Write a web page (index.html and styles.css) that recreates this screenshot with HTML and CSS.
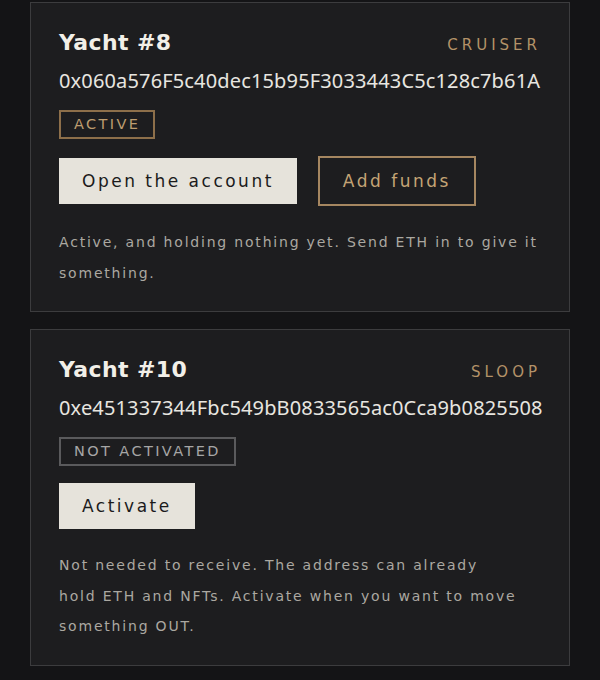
FILE: index.html
```html
<!DOCTYPE html>
<html lang="en">
<head>
    <meta charset="UTF-8">
    <meta name="viewport" content="width=device-width, initial-scale=1.0">
    <title>Yachts</title>
    <link rel="stylesheet" href="styles.css">
</head>
<body>
    <div class="yacht-list">
        <div class="yacht-card">
            <div class="yacht-head">
                <h3>Yacht #8</h3>
                <span class="yacht-class">CRUISER</span>
            </div>
            <div class="yacht-address">0x060a576F5c40dec15b95F3033443C5c128c7b61A</div>
            <span class="badge badge-active">ACTIVE</span>
            <div class="yacht-actions">
                <button class="btn btn-light">Open the account</button>
                <button class="btn btn-outline">Add funds</button>
            </div>
            <p class="yacht-note">Active, and holding nothing yet. Send ETH in to give it something.</p>
        </div>

        <div class="yacht-card">
            <div class="yacht-head">
                <h3>Yacht #10</h3>
                <span class="yacht-class">SLOOP</span>
            </div>
            <div class="yacht-address">0xe451337344Fbc549bB0833565ac0Cca9b0825508</div>
            <span class="badge badge-idle">NOT ACTIVATED</span>
            <div class="yacht-actions">
                <button class="btn btn-light">Activate</button>
            </div>
            <p class="yacht-note yacht-hint">Not needed to receive. The address can already hold ETH and NFTs. Activate when you want to move something OUT.</p>
        </div>
    </div>
</body>
</html>
```

FILE: styles.css
```css
body {
    margin: 0;
    padding: 2px 30px 0;
    background: #141416;
    font-family: "DejaVu Sans", sans-serif;
    color: #ece9e2;
}

.yacht-list {
    display: flex;
    flex-direction: column;
    gap: 17px;
}

.yacht-card {
    background: #1d1d1f;
    border: 1px solid #3c3c3e;
    padding: 25px 28px 23px;
}

.yacht-head {
    display: flex;
    justify-content: space-between;
    align-items: baseline;
}

.yacht-head h3 {
    margin: 0;
    font-size: 22px;
    line-height: 29px;
    font-weight: bold;
    letter-spacing: 0.4px;
    color: #f2efe8;
}

.yacht-class {
    font-size: 15px;
    letter-spacing: 4px;
    color: #b39268;
}

.yacht-address {
    margin-top: 10px;
    font-family: "Noto Sans", sans-serif;
    font-size: 20px;
    line-height: 28px;
    letter-spacing: 0.15px;
    color: #e8e6e0;
}

.badge {
    display: inline-block;
    margin-top: 15px;
    padding: 5px 13px;
    font-size: 14.5px;
    line-height: 15px;
    letter-spacing: 2.4px;
    border: 2px solid;
}

.badge-active {
    border-color: #8d6f4a;
    color: #bd9d70;
}

.badge-idle {
    border-color: #5a5a5c;
    color: #a6a6a6;
}

.yacht-actions {
    display: flex;
    align-items: center;
    gap: 21px;
    margin-top: 17px;
}

.btn {
    font-family: "DejaVu Sans", sans-serif;
    font-size: 17px;
    line-height: 20px;
    letter-spacing: 2.5px;
    padding: 13px 23px;
    cursor: pointer;
}

.btn-light {
    background: #e6e3db;
    color: #1b1b1b;
    border: none;
}

.btn-outline {
    background: transparent;
    color: #c4a475;
    border: 2px solid #a58660;
}

.yacht-note {
    margin: 21px 0 0;
    font-size: 14px;
    line-height: 30.5px;
    letter-spacing: 1.8px;
    color: #aba8a1;
}

.yacht-hint {
    max-width: 460.5px;
}
```
